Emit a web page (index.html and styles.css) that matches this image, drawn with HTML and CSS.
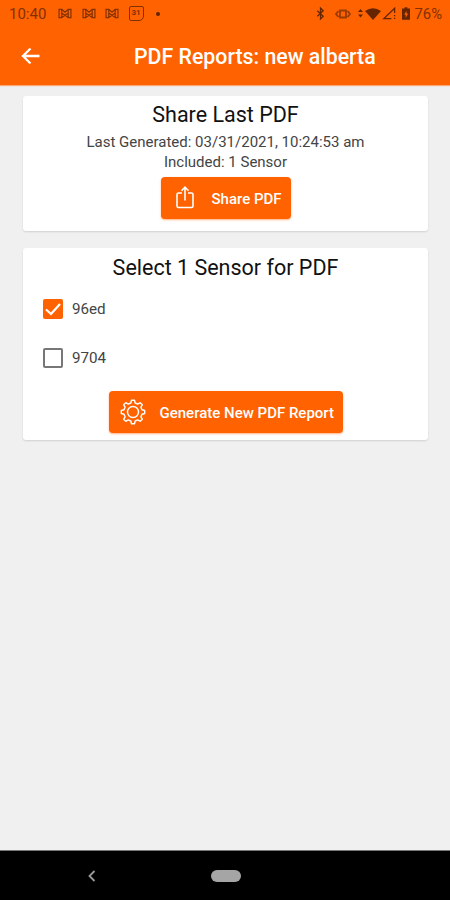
FILE: index.html
```html
<!DOCTYPE html>
<html lang="en">
<head>
<meta charset="utf-8">
<title>PDF Reports</title>
<link rel="stylesheet" href="styles.css">
</head>
<body>
<div class="screen">
  <header class="appbar">
    <div class="status">
      <span class="clock">10:40</span>
      <div class="notifications">
        <svg class="mail" viewBox="0 0 15 12"><path d="M4 1.5H1V10.5H4V5.5L7.5 8 11 5.500V10.500H14V1.500H11L7.500 4.500ZM4 1.500V5.500M11 1.500V5.500M4 10.500L7.500 8 11 10.500"/></svg>
        <svg class="mail" viewBox="0 0 15 12"><path d="M4 1.5H1V10.5H4V5.5L7.5 8 11 5.500V10.500H14V1.500H11L7.500 4.500ZM4 1.500V5.500M11 1.500V5.500M4 10.500L7.500 8 11 10.500"/></svg>
        <svg class="mail" viewBox="0 0 15 12"><path d="M4 1.5H1V10.5H4V5.5L7.5 8 11 5.500V10.500H14V1.500H11L7.500 4.500ZM4 1.500V5.500M11 1.500V5.500M4 10.500L7.500 8 11 10.500"/></svg>
        <span class="calendar">31</span>
        <span class="dot"></span>
      </div>
      <div class="system">
        <svg class="bluetooth" viewBox="0 0 10 14"><path d="M1.500 4L8 10 5 13V1L8 4 1.500 10"/></svg>
        <svg class="vibrate" viewBox="0 0 16 12"><path d="M5 2.500H11V9.500H5ZM3.500 3L1 6 3.500 9M12.500 3L15 6 12.500 9"/></svg>
        <svg class="arrows" viewBox="0 0 5 11"><path d="M0 4L2.500 1 5 4ZM0 6.500H5L2.500 9.500Z"/></svg>
        <svg class="wifi" viewBox="0 0 16 12"><path d="M0 3Q8-2.500 16 3L8 12Z"/></svg>
        <svg class="signal" viewBox="0 0 14 13"><path d="M9 12H1L12.500 1V6M12.500 8V9.500M12.500 11V12.500"/></svg>
        <svg class="battery" viewBox="0 0 9 14"><path fill-rule="evenodd" d="M3 0H6V1.500H9V14H0V1.500H3ZM5 4L2.500 8.500H4.200V12L6.800 7H5Z"/></svg>
        <span class="percent">76%</span>
      </div>
    </div>
    <div class="titlebar">
      <svg class="back" viewBox="0 0 20 18"><path d="M18.500 9H2M9.500 1.500L2 9 9.500 16.500"/></svg>
      <h1>PDF Reports: new alberta</h1>
    </div>
  </header>
  <main>
    <section class="card share">
      <h2>Share Last PDF</h2>
      <p class="generated">Last Generated: 03/31/2021, 10:24:53 am</p>
      <p class="included">Included: 1 Sensor</p>
      <button class="button share-button">
        <svg class="share-icon" viewBox="0 0 20 24"><path d="M7 7H3.500Q2 7 2 8.500V20Q2 21.500 3.500 21.500H16.500Q18 21.500 18 20V8.500Q18 7 16.500 7H13M10 14.500V1.500M6.500 4.700L10 1.200 13.500 4.700"/></svg>
        <span>Share PDF</span>
      </button>
    </section>
    <section class="card select">
      <h2>Select 1 Sensor for PDF</h2>
      <label class="option"><span class="box checked"><svg viewBox="0 0 20 20"><path d="M3 10.500L8 15 17 5"/></svg></span><span>96ed</span></label>
      <label class="option"><span class="box"></span><span>9704</span></label>
      <button class="button generate-button">
        <svg class="gear" viewBox="-13 -13 26 26"><path d="M-2.200-9L-1.500-11.700H1.500L2.200-9 4.800-7.900 7.200-9.300 9.300-7.200 7.900-4.800 9-2.200 11.700-1.500V1.500L9 2.200 7.900 4.800 9.300 7.200 7.200 9.300 4.800 7.900 2.200 9 1.500 11.700H-1.500L-2.200 9-4.800 7.900-7.200 9.300-9.300 7.200-7.900 4.800-9 2.200-11.700 1.500V-1.500L-9-2.200-7.900-4.800-9.300-7.200-7.200-9.300-4.800-7.900Z"/><circle r="5.500"/></svg>
        <span>Generate New PDF Report</span>
      </button>
    </section>
  </main>
  <nav class="navbar">
    <svg class="nav-back" viewBox="0 0 8 12"><path d="M6.500 1L1.500 6 6.500 11"/></svg>
    <span class="home"></span>
  </nav>
</div>
</body>
</html>
```
FILE: styles.css
```css
* { box-sizing: border-box; }
body { margin: 0; font-family: Roboto, "Liberation Sans", sans-serif; }
h1, h2, p { margin: 0; white-space: nowrap; }
svg { display: block; flex: none; fill: none; stroke: currentColor; overflow: visible; }
.screen { width: 450px; height: 900px; display: flex; flex-direction: column; background: #f0f0f0; }
.appbar { height: 85px; background: #ff6200; color: #fff; box-shadow: 0 1px 1px #ff620080; flex: none; }
.status { height: 27px; display: flex; align-items: center; justify-content: space-between; padding: 0 8px 0 9px; color: #833100; font-size: 15px; }
.clock { width: 49px; }
.notifications { flex: 1; display: flex; align-items: center; gap: 9.500px; }
.mail { width: 14px; height: 11px; stroke-width: 1.300; }
.calendar { width: 15px; height: 15px; border: 1.500px solid; border-radius: 2px 2px 5px 2px; font-size: 8px; line-height: 12px; font-weight: 700; text-align: center; }
.dot { width: 4px; height: 4px; margin-left: 3px; border-radius: 50%; background: #5f2400; }
.system { display: flex; align-items: center; color: #642500; }
.bluetooth { width: 9px; height: 13px; stroke-width: 1.400; margin-right: 10px; }
.vibrate { width: 16px; height: 12px; stroke-width: 1.800; margin-right: 7px; color: #9a3b00; }
.arrows { width: 5px; height: 11px; margin-right: 2px; fill: currentColor; stroke: none; }
.wifi { width: 16px; height: 12px; margin-right: 2px; fill: currentColor; stroke: none; }
.signal { width: 13px; height: 13px; margin-right: 6px; stroke-width: 1.400; }
.battery { width: 8px; height: 13px; margin-right: 5px; fill: currentColor; stroke: none; }
.percent { color: #833100; font-size: 14.800px; }
.titlebar { height: 58px; display: flex; align-items: center; padding-left: 21px; }
.back { width: 20px; height: 18px; stroke-width: 2.300; }
h1 { margin-left: 93px; padding-top: 2px; font-size: 21.300px; font-weight: 500; line-height: 28px; }
main { flex: 1; padding: 10.700px 22px 0 23px; }
.card { display: flex; flex-direction: column; align-items: center; background: #fff; border-radius: 3px; box-shadow: 0 1px 2px #0002; color: #444; font-size: 15px; }
.share { height: 135px; padding-top: 5px; }
.select { height: 192px; margin-top: 17.300px; padding-top: 6px; }
h2 { color: #111; font-size: 21.500px; line-height: 27px; font-weight: 400; }
.generated { margin-top: 4.500px; line-height: 20px; }
.included { line-height: 20px; }
.button { display: flex; align-items: center; border: 0; border-radius: 4px; background: #ff6200; color: #fff; font: 500 15px Roboto, sans-serif; height: 42px; padding: 0; white-space: nowrap; box-shadow: 0 1px 2px #ff620080; }
.button span { padding-top: 2px; }
.share-button { width: 130px; margin-top: 5px; padding-left: 14px; gap: 17px; }
.share-icon { width: 20px; height: 24px; stroke-width: 1.600; }
.option { align-self: stretch; display: flex; align-items: center; height: 49px; padding-left: 20px; gap: 9px; font-size: 15.200px; }
.select h2 + .option { margin-top: 3.600px; }
.box { width: 20px; height: 20px; border: 2px solid #777; border-radius: 2px; }
.checked { border: 0; background: #ff6200; color: #fff; }
.checked svg { width: 20px; height: 20px; stroke-width: 2.300; }
.generate-button { width: 234px; margin-top: 8.400px; padding-left: 11px; gap: 14px; }
.gear { width: 26px; height: 26px; stroke-width: 1.400; stroke-linejoin: round; }
.navbar { height: 50px; flex: none; display: flex; align-items: center; background: #000; border-top: 1px solid #777; padding-left: 88px; }
.nav-back { width: 8px; height: 12px; color: #999; stroke-width: 1.800; }
.home { width: 30px; height: 12px; margin-left: 115px; border-radius: 6px; background: #a5a5a5; }
```
